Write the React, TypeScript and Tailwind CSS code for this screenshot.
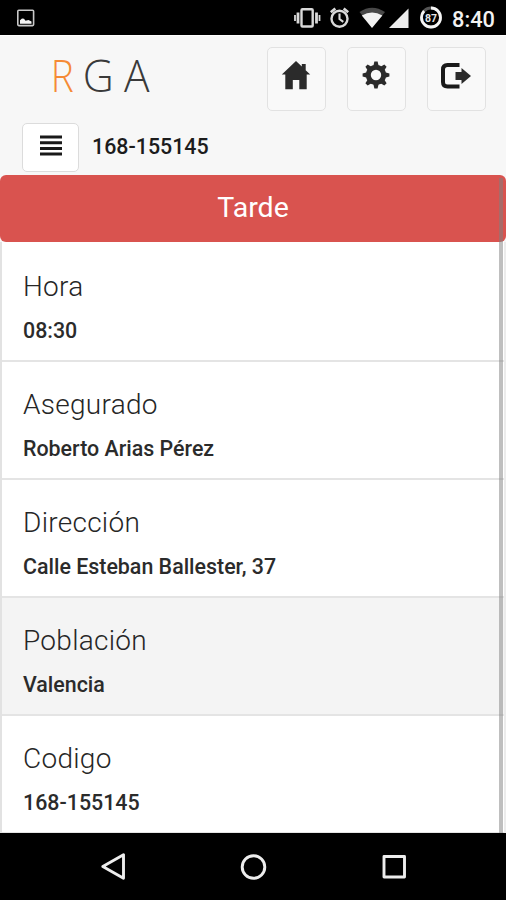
import React from "react";

const rows = [
  { label: "Hora", value: "08:30" },
  { label: "Asegurado", value: "Roberto Arias Pérez" },
  { label: "Dirección", value: "Calle Esteban Ballester, 37" },
  { label: "Población", value: "Valencia", active: true },
  { label: "Codigo", value: "168-155145" },
];

function StatusBar() {
  return (
    <div className="flex h-[35px] shrink-0 items-center justify-between bg-black">
      <svg width="20" height="20" viewBox="0 0 20 20" className="ml-4">
        <rect x="1.8" y="2.2" width="15.8" height="15.4" rx="1" fill="none" stroke="#c8c8c8" strokeWidth="1.6" />
        <path d="M4 15.800V12.300l2-1.800 2 .3 1.500 2 3-.8 3 1.500v2.300z" fill="#f4f4f4" />
      </svg>
      <div className="flex items-center">
        <svg width="160" height="35" viewBox="290 0 160 35">
          <g stroke="#d9d9d9" fill="none" strokeWidth="2.4">
            <rect x="301.500" y="9.300" width="11.200" height="17.200" rx="1" />
            <path d="M298 12.500v11M316.500 12.500v11" strokeWidth="2.800" />
            <path d="M295 15v6M319.500 15v6" strokeWidth="1.800" />
            <circle cx="339.500" cy="18.700" r="8" />
            <path d="M339.500 13.500v5.500l3.800 2.800" strokeWidth="2.100" />
            <path d="M330.800 12.200l4.500-3.800M348.200 12.200l-4.500-3.800" strokeWidth="2.600" />
          </g>
          <path d="M372 27.500L359.500 12q12.500-8.500 25.500 0z" fill="#484848" />
          <path d="M372 28L361.800 15.600q10.300-6 20.600 0z" fill="#f2f2f2" />
          <path d="M389 28L408.500 8.500V28z" fill="#ededed" />
          <circle cx="431" cy="17.500" r="9.500" fill="none" stroke="#555" strokeWidth="2.800" />
          <circle cx="431" cy="17.500" r="9.500" fill="none" stroke="#f5f5f5" strokeWidth="2.800" pathLength="100" strokeDasharray="87 13" transform="rotate(-90 431 17.500)" />
          <text x="431" y="21.500" textAnchor="middle" fontFamily="Roboto, sans-serif" fontSize="10.500" fontWeight="700" fill="#e5e5e5">87</text>
        </svg>
        <span className="w-[56px] pt-[4px] pl-[2px] text-[21.8px] leading-[30px] font-medium text-[#f2f2f2]">8:40</span>
      </div>
    </div>
  );
}

function HomeIcon() {
  return (
    <svg width="30" height="30" viewBox="0 0 30 30" fill="#2b2b2b">
      <path d="M15 1L0.800 14.500H4.300V29.200H11.800V20H18.300V29.200H25.700V14.500H29.200L24.700 10.200V4H20.800V6.500z" />
    </svg>
  );
}

function GearIcon() {
  return (
    <svg width="28" height="28" viewBox="-14 -14 28 28">
      <circle r="7.700" fill="none" stroke="#2b2b2b" strokeWidth="5" />
      {[0, 45, 90, 135, 180, 225, 270, 315].map((angle) => (
        <path key={angle} d="M-2.700-9L-1.600-13.400H1.600L2.700-9z" fill="#2b2b2b" transform={`rotate(${angle})`} />
      ))}
    </svg>
  );
}

function LogoutIcon() {
  return (
    <svg width="30" height="26" viewBox="0 0 30 26">
      <path d="M18.500 2H6.500Q2 2 2 6.500V19Q2 23.500 6.500 23.500H18.500" fill="none" stroke="#1a1a1a" strokeWidth="4" />
      <path d="M14.500 9H20.500V5L30 13L20.500 21V17H14.500z" fill="#2b2b2b" />
    </svg>
  );
}

function Header() {
  const box = "flex h-[64px] w-[59px] justify-center rounded-[5px] border-[1.5px] border-[#e2e2e2] bg-[#f9f9f9]";
  return (
    <header className="flex h-[140px] shrink-0 flex-col border-t border-white bg-[#f7f7f7]">
      <div className="flex h-[87px] items-start justify-between pr-[20.500px] pl-[40px]">
        <svg width="120" height="80" viewBox="40 36 120 80" fontFamily="'Open Sans', sans-serif" fontWeight="300" fontSize="44.500">
          <text x="50.800" y="91.500" fill="#f58a35" textLength="23" lengthAdjust="spacingAndGlyphs">R</text>
          <text x="82.800" y="91.500" fill="#3a3a3a" textLength="31" lengthAdjust="spacingAndGlyphs">G</text>
          <text x="124" y="91.500" fill="#3a3a3a" textLength="25.500" lengthAdjust="spacingAndGlyphs">A</text>
        </svg>
        <div className="flex gap-[21px] pt-[11px]">
          <button className={`${box} pt-[12px]`}><HomeIcon /></button>
          <button className={`${box} pt-[13px]`}><GearIcon /></button>
          <button className={`${box} pt-[15px]`}><LogoutIcon /></button>
        </div>
      </div>
      <div className="flex items-start pl-[22px]">
        <button className="flex h-[49px] w-[57px] justify-center rounded-[5px] border-[1.5px] border-[#dcdcdc] bg-white pt-[11px]">
          <svg width="22" height="22" viewBox="0 0 22 22" stroke="#1a1a1a" strokeWidth="3">
            <path d="M0 2H22M0 7.700H22M0 13.400H22M0 19.100H22" />
          </svg>
        </button>
        <span className="ml-[13px] pt-[8px] text-[21.4px] leading-[32px] font-medium text-[#1c1c1c]">168-155145</span>
      </div>
    </header>
  );
}

export default function App() {
  return (
    <div className="flex h-[900px] w-[506px] flex-col overflow-hidden bg-[#f7f7f7] font-['Roboto',sans-serif]">
      <StatusBar />
      <Header />
      <main className="relative h-[658px] shrink-0 overflow-hidden">
        <div className="h-[67px] rounded-[6px] bg-[#d9534f] text-center text-[28.5px] leading-[65px] text-white">Tarde</div>
        <div className="border-x-2 border-l-[#e2e2e2] border-r-[#ececec] bg-white pt-[2px]">
          {rows.map((row) => (
            <div
              key={row.label}
              className={`h-[118px] border-b-2 border-[#e4e4e4] pl-[21px] pt-[24px] ${row.active ? "bg-[#f4f4f4]" : "bg-white"}`}
            >
              <div className="text-[28px] leading-[38px] font-light tracking-[0.28px] text-[#262626]">{row.label}</div>
              <div className="pt-[9px] text-[21.4px] leading-[32px] font-medium text-[#2b2b2b]">{row.value}</div>
            </div>
          ))}
        </div>
        <div className="absolute top-[3px] right-[3.500px] h-[64px] w-[4px] bg-[#808080]/55" />
        <div className="absolute top-[67px] right-[3.500px] h-[591px] w-[4px] bg-[#808080]/50" />
      </main>
      <nav className="flex h-[67px] shrink-0 items-center bg-black">
        <svg width="506" height="67" viewBox="0 833 506 67" fill="none" stroke="#ededed" strokeWidth="2.900" strokeLinejoin="round">
          <path d="M102.800 866.500L123.500 854.800V878.200z" />
          <circle cx="253.500" cy="867" r="11.300" />
          <rect x="384" y="856.500" width="20.500" height="20.500" />
        </svg>
      </nav>
    </div>
  );
}
